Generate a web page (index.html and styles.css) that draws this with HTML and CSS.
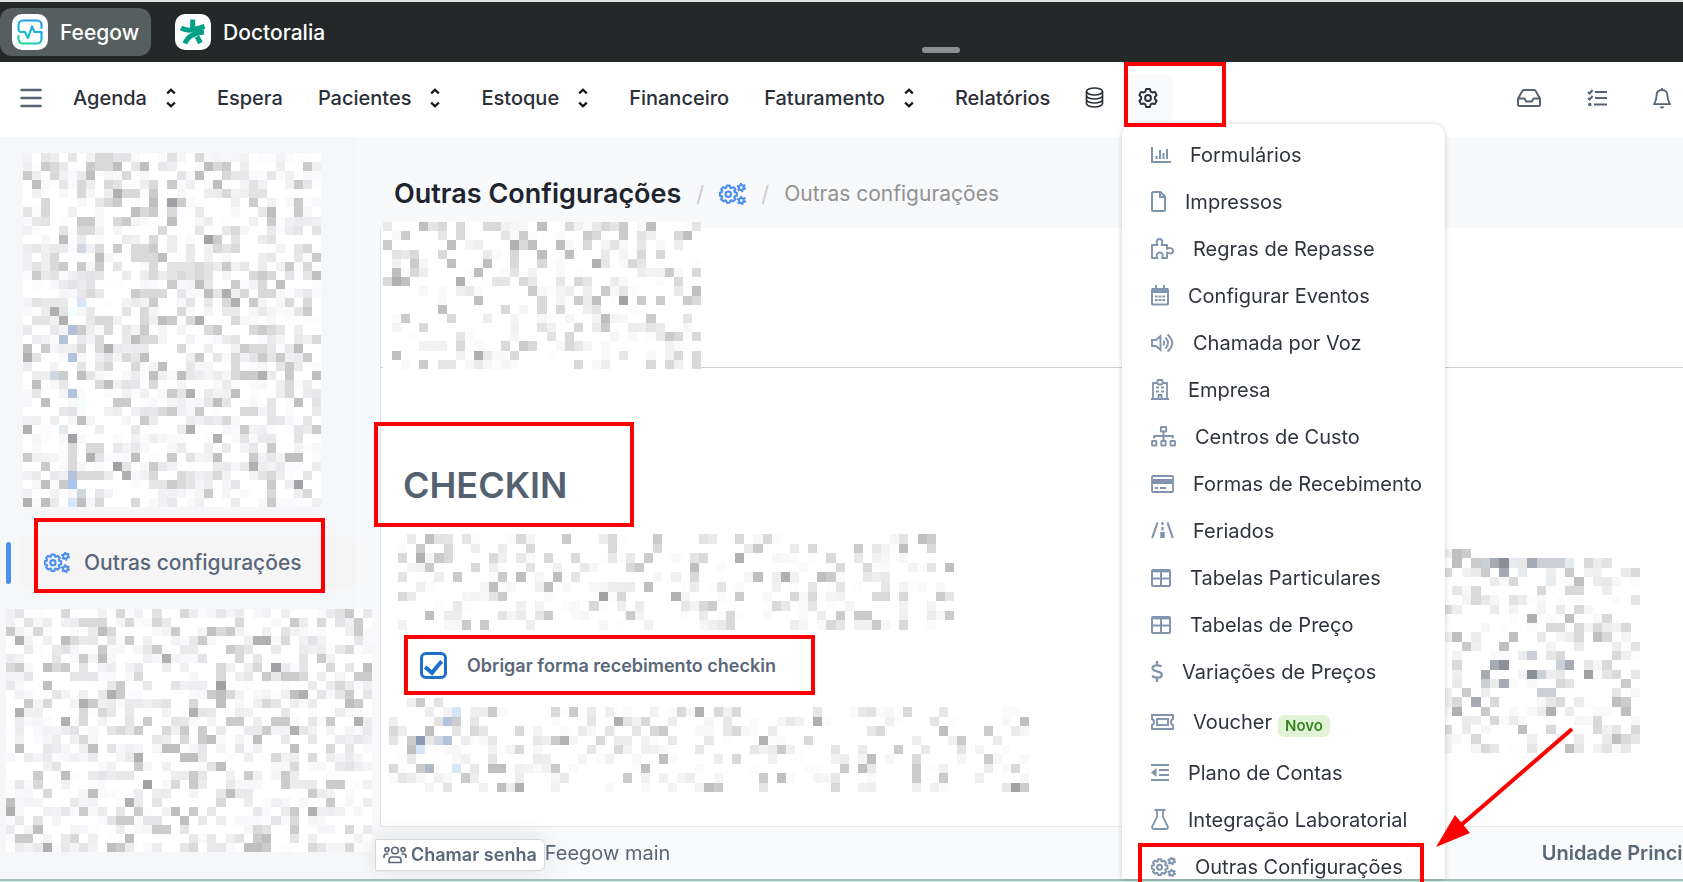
FILE: index.html
```html
<!DOCTYPE html>
<html lang="pt-BR">
<head>
<meta charset="utf-8">
<title>Outras Configurações</title>
<link rel="stylesheet" href="styles.css">
</head>
<body>
<svg class="defs" aria-hidden="true">
  <defs>
    <linearGradient id="brand" x1="0" y1="1" x2="0.6" y2="0"><stop offset="0" stop-color="#1fe08a"/><stop offset="0.5" stop-color="#19b9d8"/><stop offset="1" stop-color="#1f9df0"/></linearGradient>
    <path id="teeth" d="M-1.4-7.9H1.4L1.9-6L2.9-5.6L4.6-6.6L6.6-4.6L5.6-2.9L6-1.9L7.9-1.4V1.4L6 1.9L5.6 2.9L6.6 4.6L4.6 6.6L2.9 5.6L1.9 6L1.4 7.9H-1.4L-1.9 6L-2.9 5.6L-4.6 6.6L-6.6 4.6L-5.6 2.9L-6 1.9L-7.9 1.4V-1.4L-6-1.9L-5.6-2.9L-6.6-4.6L-4.6-6.6L-2.9-5.6L-1.9-6Z"/>
    <symbol id="cogs" viewBox="0 0 25 20">
      <g fill="none" stroke="currentColor" stroke-linejoin="round" stroke-width="2">
        <use href="#teeth" x="8.6" y="10.2"/><circle cx="8.6" cy="10.2" r="2.5"/>
      </g>
      <g fill="none" stroke="currentColor" stroke-width="2"><circle cx="20.7" cy="4" r="2.3"/><circle cx="20.7" cy="16" r="2.3"/></g>
      <g fill="none" stroke="currentColor" stroke-width="1.6" stroke-dasharray="1.9 1.9"><circle cx="20.7" cy="4" r="3.6"/><circle cx="20.7" cy="16" r="3.6"/></g>
    </symbol>
    <symbol id="updown" viewBox="0 0 10 20"><path d="M1.2 5.4L5 1.8L8.8 5.4M1.2 14.6L5 18.2L8.8 14.6" fill="none" stroke="currentColor" stroke-width="2.2"/></symbol>
    <symbol id="grid" viewBox="0 0 20 18"><path d="M2 1H18a1 1 0 0 1 1 1V16a1 1 0 0 1-1 1H2a1 1 0 0 1-1-1V2a1 1 0 0 1 1-1ZM1 9.5H19M10 2V17" fill="none" stroke="currentColor" stroke-width="2"/><path d="M1 1H19V3.4H1Z" fill="currentColor"/></symbol>
  </defs>
</svg>

<header class="products">
  <a class="product product-on" href="#"><span class="logo"><svg width="26" height="26" viewBox="0 0 26 26" fill="none" stroke="url(#brand)" stroke-width="2.200" stroke-linecap="round" stroke-linejoin="round"><path d="M1.500 10V6a4.500 4.500 0 0 1 4.500-4.500H20A4.500 4.500 0 0 1 24.500 6V9M24.500 13V20a4.500 4.500 0 0 1-4.500 4.500H6A4.500 4.500 0 0 1 1.500 20V17M1.500 10Q1.500 13 4 13H8L11 19L15 7.500L17.500 13H24.500"/></svg></span>Feegow</a>
  <a class="product" href="#"><span class="logo"><svg width="26" height="26" viewBox="0 0 26 26" fill="none" stroke="#00a187" stroke-width="5"><path d="M12.700 0.500V8.500M1 9C4.500 11 8.500 11.600 12.500 10.800C17 9.900 21 8.600 24.500 7.400"/><path d="M5 24.500C7.500 17.500 13 14 24 13"/><path d="M17 17.500L20.500 24"/></svg></span>Doctoralia</a>
  <span class="grip"></span>
</header>

<nav class="nav">
  <button class="icon-btn burger" aria-label="Menu"><svg width="22" height="20" viewBox="0 0 22 20" stroke="currentColor" stroke-width="2.600" stroke-linecap="round"><path d="M1.500 2H20.500M1.500 10H20.500M1.500 18H20.500"/></svg></button>
  <a href="#">Agenda<svg class="updown"><use href="#updown"/></svg></a>
  <a href="#">Espera</a>
  <a href="#">Pacientes<svg class="updown"><use href="#updown"/></svg></a>
  <a href="#">Estoque<svg class="updown"><use href="#updown"/></svg></a>
  <a href="#">Financeiro</a>
  <a href="#">Faturamento<svg class="updown"><use href="#updown"/></svg></a>
  <a href="#">Relatórios</a>
  <a href="#" aria-label="Dados"><svg width="19" height="21" viewBox="0 0 19 21" fill="none" stroke="currentColor" stroke-width="1.700"><ellipse cx="9.500" cy="4.500" rx="8" ry="3.500"/><path d="M1.500 4.500V16.500C1.500 18.500 5 20 9.500 20S17.500 18.500 17.500 16.500V4.500M1.500 8.500C1.500 10.500 5 12 9.500 12S17.500 10.500 17.500 8.500M1.500 12.500C1.500 14.500 5 16 9.500 16S17.500 14.500 17.500 12.500"/></svg></a>
  <button class="icon-btn gear" aria-label="Configurações"><svg width="22" height="22" viewBox="0 0 24 24" fill="none" stroke="currentColor" stroke-width="2.100" stroke-linejoin="round"><path d="M9.900 2.200H14.100L14.800 5L16.700 6L19.400 5.300L21.500 8.900L19.500 10.900V13.100L21.500 15.100L19.400 18.700L16.700 18L14.800 19L14.100 21.800H9.900L9.200 19L7.300 18L4.600 18.700L2.500 15.100L4.500 13.100V10.900L2.500 8.900L4.600 5.300L7.300 6L9.200 5Z"/><circle cx="12" cy="12" r="3.200"/></svg></button>
  <span class="nav-end">
    <button class="icon-btn" aria-label="Entrada"><svg width="24" height="18" viewBox="0 0 24 18" fill="none" stroke="currentColor" stroke-width="2" stroke-linejoin="round"><path d="M1 9.500L5.500 1.800Q6 1 7 1H17Q18 1 18.500 1.800L23 9.500V15.500Q23 17 21.500 17H2.500Q1 17 1 15.500ZM1.500 9.500H7.500L9.200 12.500H14.800L16.500 9.500H22.500"/></svg></button>
    <button class="icon-btn" aria-label="Tarefas"><svg width="20" height="18" viewBox="0 0 20 18" fill="none" stroke="currentColor" stroke-width="2"><path d="M8 3H20M8 9H20M7 15.500H20M1 3L2.600 4.500L5.600 1M1 9L2.600 10.500L5.600 7"/><circle cx="2.800" cy="15.500" r="0.800"/></svg></button>
    <button class="icon-btn" aria-label="Notificações"><svg width="18" height="22" viewBox="0 0 18 22" fill="none" stroke="currentColor" stroke-width="1.800" stroke-linejoin="round"><path d="M9 1V3M9 3C5.500 3 3.500 5.500 3.500 9C3.500 13 2.500 14.500 1 17.200H17C15.500 14.500 14.500 13 14.500 9C14.500 5.500 12.500 3 9 3Z"/><path d="M6.500 19.500H11.500Q11 21.500 9 21.500T6.500 19.500Z" fill="currentColor" stroke="none"/></svg></button>
  </span>
</nav>

<div class="body">
  <aside class="side">
    <canvas class="blur blur-a" id="m1"></canvas>
    <a class="side-item" href="#"><svg width="26" height="21"><use href="#cogs"/></svg>Outras configurações</a>
    <canvas class="blur blur-b" id="m6"></canvas>
  </aside>
  <main class="main">
    <div class="crumbs">
      <h1>Outras Configurações</h1><i>/</i><svg width="27" height="22"><use href="#cogs"/></svg><i>/</i><span>Outras configurações</span>
    </div>
    <section class="panel">
      <div class="tabs"><canvas class="blur blur-c" id="m2"></canvas></div>
      <div class="cols">
        <div class="form">
          <h2>CHECKIN</h2>
          <canvas class="blur blur-d" id="m3"></canvas>
          <label class="check"><input type="checkbox" checked>Obrigar forma recebimento checkin</label>
          <canvas class="blur blur-e" id="m4"></canvas>
        </div>
        <canvas class="blur blur-f" id="m5"></canvas>
      </div>
    </section>
    <footer class="foot">
      <button class="call"><svg width="24" height="18" viewBox="0 0 24 18" fill="none" stroke="currentColor" stroke-width="1.600"><circle cx="12" cy="4.500" r="3.300"/><circle cx="4" cy="3.600" r="2"/><circle cx="20" cy="3.600" r="2"/><path d="M6 16.500V14.500Q6 11 9 11H15Q18 11 18 14.500V16.500ZM1 12V10.500Q1 8 3.500 8H5.500M23 12V10.500Q23 8 20.500 8H18.500"/></svg>Chamar senha</button>
      <span>Feegow main</span>
      <strong>Unidade Principal</strong>
    </footer>
  </main>
</div>
<div class="baseline"></div>

<div class="menu">
  <a href="#"><svg width="20" height="16" viewBox="0 0 20 16" fill="none" stroke="currentColor" stroke-width="2"><path d="M1 0V15H20M5.500 9V12M9 3V12M12.500 6V12M16 2V12"/></svg>Formulários</a>
  <a href="#"><svg width="15" height="21" viewBox="0 0 15 21" fill="none" stroke="currentColor" stroke-width="2"><path d="M2.500 1H9.500L14 5.500V18.500Q14 20 12.500 20H2.500Q1 20 1 18.500V2.500Q1 1 2.500 1ZM9 1V6H14"/></svg>Impressos</a>
  <a href="#"><svg width="23" height="21" viewBox="0 0 23 21" fill="none" stroke="currentColor" stroke-width="1.900" stroke-linejoin="round"><path d="M1 7H6.500C5.500 5.500 5 1 8.500 1S11.500 5.500 10.500 7H16V11C17.500 9.500 22 9.500 22 13S17.500 15.500 16 14.500V20H11C12.500 17 11.500 14.500 8.800 14.500S5 17 6.500 20H1V16Z"/></svg>Regras de Repasse</a>
  <a href="#"><svg width="18" height="21" viewBox="0 0 18 21" fill="none" stroke="currentColor" stroke-width="2"><rect x="1" y="4" width="16" height="15.500" rx="1"/><path d="M1 5.500H17" stroke-width="5"/><path d="M5 0V4M13 0V4"/><path d="M4 11.500H14M4 15H14" stroke-dasharray="2.600 1.100"/></svg>Configurar Eventos</a>
  <a href="#"><svg width="23" height="20" viewBox="0 0 23 20" fill="none" stroke="currentColor" stroke-width="1.900"><path d="M1 7H5L9.500 3V17L5 13H1ZM12.500 7.500Q14 10 12.500 12.500M14.500 4.500Q19.500 10 14.500 15.500M16.500 1.500Q26 10 16.500 18.500"/></svg>Chamada por Voz</a>
  <a href="#"><svg width="18" height="21" viewBox="0 0 18 21" fill="none" stroke="currentColor" stroke-width="1.800"><path d="M0 20H18M2 20V4H16V20M7.500 20V16H10.500V20"/><path d="M5 8.500H8M10 8.500H13M5 12.500H8M10 12.500H13" stroke-width="2.200"/><rect x="6.500" y="1" width="5" height="4.500" rx="1" fill="#fff"/></svg>Empresa</a>
  <a href="#"><svg width="25" height="21" viewBox="0 0 25 21" fill="none" stroke="currentColor" stroke-width="1.900"><rect x="9.800" y="1" width="5.400" height="4.500" rx="0.500"/><rect x="1" y="15" width="4.400" height="4.500" rx="0.500"/><rect x="10.300" y="15" width="4.400" height="4.500" rx="0.500"/><rect x="19.600" y="15" width="4.400" height="4.500" rx="0.500"/><path d="M12.500 5.500V15M3.200 12.500V10H21.800V12.500"/></svg>Centros de Custo</a>
  <a href="#"><svg width="23" height="18" viewBox="0 0 23 18" fill="none" stroke="currentColor" stroke-width="1.800"><rect x="1" y="1" width="21" height="16" rx="1"/><path d="M1 6.500H22" stroke-width="5"/><path d="M4 13H7M9 13H15"/></svg>Formas de Recebimento</a>
  <a href="#"><svg width="23" height="17" viewBox="0 0 23 17" fill="none" stroke="currentColor" stroke-width="2.200"><path d="M6.500 0.500L1.200 16M16.500 0.500L21.800 16M11.500 0V3M11.500 5V8.500"/><path d="M11.500 10V16" stroke-width="4.500"/></svg>Feriados</a>
  <a href="#"><svg width="20" height="18"><use href="#grid"/></svg>Tabelas Particulares</a>
  <a href="#"><svg width="20" height="18"><use href="#grid"/></svg>Tabelas de Preço</a>
  <a href="#"><svg width="12" height="21" viewBox="0 0 12 21" fill="none" stroke="currentColor" stroke-width="2.300"><path d="M10.500 5.500C8 3.800 1.500 3.500 1.500 7.200C1.500 11.500 10.800 9 10.800 13.700C10.800 17.500 4 17.300 1 15M6 0V4M6 17V21"/></svg>Variações de Preços</a>
  <a class="tall" href="#"><svg width="23" height="16" viewBox="0 0 23 16" fill="none" stroke="currentColor" stroke-width="1.900"><path d="M1 1H22V5Q20 5.500 20 8T22 11V15H1V11Q3 10.500 3 8T1 5Z"/><rect x="6" y="5" width="11" height="6"/></svg>Voucher<em>Novo</em></a>
  <a href="#"><svg width="18" height="17" viewBox="0 0 18 17" fill="none" stroke="currentColor" stroke-width="1.900"><path d="M0 1H18M8 6H18M8 11H18M0 16H18"/><path d="M5.500 4V13L0 8.500Z" fill="currentColor" stroke="none"/></svg>Plano de Contas</a>
  <a href="#"><svg width="18" height="21" viewBox="0 0 18 21" fill="none" stroke="currentColor" stroke-width="1.800"><path d="M3.500 1H14.500M6 1V8L1.200 17.500Q0.500 20 2.800 20H15.200Q17.500 20 16.800 17.500L12 8V1"/></svg>Integração Laboratorial</a>
  <a href="#"><svg width="25" height="20"><use href="#cogs"/></svg>Outras Configurações</a>
</div>

<svg class="marks" fill="none" stroke="#ff0000" stroke-width="4">
  <rect x="1126" y="64" width="98" height="61"/>
  <rect x="36" y="520" width="287" height="71"/>
  <rect x="376" y="424" width="256" height="101"/>
  <rect x="406" y="637" width="407" height="56"/>
  <rect x="1140" y="845" width="282" height="42"/>
  <path d="M1572 729L1460 826"/>
  <path d="M1436 847L1455 815L1470 833Z" fill="#ff0000" stroke="none"/>
</svg>
<script src="mosaic.js"></script>
</body>
</html>
```
FILE: styles.css
```css
* { box-sizing: border-box; }
body {
  margin: 0;
  height: 100vh;
  overflow: hidden;
  position: relative;
  display: flex;
  flex-direction: column;
  font-family: Inter, "Liberation Sans", sans-serif;
  font-size: 20px;
  color: #2b2f38;
  background: #fff;
}
a { color: inherit; text-decoration: none; }
button { font: inherit; color: inherit; border: 0; background: none; padding: 0; }
svg { display: block; flex: none; }
canvas { display: block; image-rendering: pixelated; }
.defs { position: absolute; width: 0; height: 0; }

.products {
  flex: none;
  height: 62px;
  display: flex;
  align-items: center;
  gap: 12px;
  background: #242829;
  border-top: 2px solid #dfe3e1;
  color: #fff;
  font-size: 21px;
  font-weight: 500;
  position: relative;
}
.product { display: flex; align-items: center; gap: 12px; height: 48px; padding: 0 12px; border-radius: 12px; }
.product-on { background: #565f5f; }
.logo { width: 36px; height: 36px; border-radius: 10px; background: #fff; display: grid; place-items: center; }
.grip { position: absolute; left: 922px; bottom: 9px; width: 38px; height: 6px; border-radius: 3px; background: #899090; }

.nav { flex: none; height: 75px; display: flex; align-items: center; gap: 35px; padding: 0 12px 4px 20px; font-weight: 500; }
.nav a { display: flex; align-items: center; }
.updown { width: 10px; height: 20px; margin: 0 6px 0 19px; color: #111; }
.icon-btn { color: #566375; }
.burger { margin-right: -4px; }
.gear { width: 52px; height: 48px; margin-left: -18px; padding-left: 16px; border-radius: 8px; background: #f9fafc; color: #2b2f38; }
.nav-end { margin-left: auto; display: flex; align-items: center; gap: 46px; }

.body { flex: 1; min-height: 0; display: flex; background: #f8f9fb; }
.side { flex: none; width: 380px; background: linear-gradient(90deg, #f6f7f9 355px, #f8f9fa 356px); padding-top: 16px; }
.blur-a { width: 298px; height: 354px; margin-left: 23px; }
.side-item {
  display: flex;
  align-items: center;
  gap: 14px;
  height: 55px;
  margin: 28px 24px 19px 18px;
  padding-left: 26px;
  border-radius: 10px;
  background: #f5f5f5;
  color: #5a6778;
  font-size: 21px;
  font-weight: 500;
  position: relative;
}
.side-item svg { color: #4d8fef; }
.side-item::before { content: ""; position: absolute; left: -12px; top: 7px; width: 5px; height: 42px; border-radius: 3px; background: #4d8fef; }
.blur-b { width: 366px; height: 243px; margin-left: 6px; }

.main { flex: 1; min-width: 0; display: flex; flex-direction: column; }
.crumbs { flex: none; height: 91px; display: flex; align-items: center; gap: 15px; padding: 22px 0 0 14px; font-size: 21px; color: #919191; }
.crumbs h1 { margin: 0; font-size: 27px; font-weight: 600; color: #20242d; }
.crumbs i { font-style: normal; color: #ccc; font-size: 22px; }
.crumbs svg { color: #4d8fef; }
.panel { flex: 1; min-height: 0; background: #fff; border-left: 1px solid #e0e3e6; }
.tabs { height: 140px; border-bottom: 1px solid #cfcfcf; }
.blur-c { width: 318px; height: 147px; margin-left: 2px; position: relative; top: -6px; }
.cols { display: flex; justify-content: space-between; padding: 95px 43px 0 8px; }
h2 { margin: 0 0 26px 14px; font-size: 36px; line-height: 45px; font-weight: 600; color: #546171; }
.blur-d { width: 556px; height: 96px; margin-left: 9px; }
.check { display: flex; align-items: center; gap: 20px; margin: 22px 0 19px 31px; height: 27px; font-size: 18px; font-weight: 600; color: #5a6778; }
.check input { appearance: none; width: 27px; height: 27px; margin: 0; border: 3px solid #1f6fc9; border-radius: 6px; display: grid; place-items: center; }
.check input::before { content: ""; width: 7px; height: 13px; border: solid #1f6fc9; border-width: 0 4px 4px 0; transform: rotate(40deg); }
.blur-e { width: 640px; height: 94px; }
.blur-f { width: 197px; height: 204px; margin-top: 86px; }
.foot {
  flex: none;
  height: 53px;
  display: flex;
  align-items: center;
  border-top: 1px solid #e4e6e8;
  background: #f8fafc;
  color: #5a6778;
}
.foot strong { margin-left: auto; margin-right: -29px; font-weight: 600; white-space: nowrap; }
.call {
  display: flex;
  align-items: center;
  gap: 4px;
  height: 32px;
  margin: 3px 0 0 -5px;
  padding: 0 7px;
  background: #fff;
  border: 1px solid #d6d8da;
  border-radius: 0 6px 6px 0;
  font-size: 18px;
  font-weight: 600;
  box-shadow: 0 0 30px rgba(0, 0, 0, 0.12);
}
.baseline { flex: none; height: 3px; background: #c8efe5; border-top: 2px solid #a3bfb8; }

.menu {
  position: absolute;
  left: 1122px;
  top: 124px;
  width: 323px;
  height: 755px;
  overflow: hidden;
  padding: 7px 0 0 29px;
  background: #fff;
  border-radius: 12px 12px 0 0;
  box-shadow: 0 0 5px rgba(0, 0, 0, 0.2);
}
.menu a { display: flex; align-items: center; gap: 19px; height: 47px; white-space: nowrap; color: #2f343d; }
.menu svg { color: #8194ad; }
.menu .tall { height: 54px; }
.menu em { margin: 8px 0 0 -13px; padding: 0 7px; border-radius: 6px; background: #e0f3d6; color: #35851f; font-size: 15px; line-height: 22px; font-weight: 600; font-style: normal; }
.marks { position: absolute; left: 0; top: 0; width: 100%; height: 100%; pointer-events: none; }
```
FILE: mosaic.js
```js
// Censored areas: each row lists pairs of column symbol + shade; the other cells get a light noise.
var COLS = "0123456789abcdefghijklmnopqrstuvwxyzABCDEFGHIJKLMNOPQRSTUVWXYZ!#$%&*+=@";
var SHADES = { "2": "#efefef", "3": "#e3e3e4", "4": "#d9d9da", "5": "#cbcbcc", "6": "#bfbfc0", "7": "#b0b0b1", "8": "#a2a2a4",
  x: "#cfd7e0", y: "#d8e5f8", z: "#f2fffd", b: "#b2c2dc", c: "#a8c3ec", d: "#8a9ab5", e: "#aeb9c4",
  s: "#cbcfd7", t: "#a6aab4", u: "#8b8f99", v: "#e6ebf0" };

function paint(id, cols, tint, noise, rows, blank) {
  var c = document.getElementById(id), g = c.getContext("2d"), seed = cols * 977;
  c.width = cols; c.height = rows.length;
  g.fillStyle = "#fff"; g.fillRect(0, 0, cols, rows.length);
  rows.forEach(function (row, y) {
    for (var x = 0; x < cols; x++) {
      seed = (seed * 16807) % 2147483647;
      var r = seed / 2147483647;
      if (r < noise && y >= blank) {
        var v = Math.round(253 - 26 * Math.pow(r / noise, 1.3));
        g.fillStyle = "rgb(" + v + "," + v + "," + Math.min(255, v + tint) + ")";
        g.fillRect(x, y, 1, 1);
      }
    }
    row.split(" ").forEach(function (p) {
      if (!p) return;
      g.fillStyle = SHADES[p[1]];
      g.fillRect(COLS.indexOf(p[0]), y, 1, 1);
    });
  });
}

paint("m1", 33, 2, 0.52, ["84 94 g3 j4", "25 34 75 84 94 a6 d6 k6 l4 m5 v5", "05 34 76 b4 j6 m4", "16 64 94 e4 g5 l6 u5", "64 a7 b4 c4 e5 m4 p3 q3", "24 94 a5 e6 g8 h5 p5 u5", "03 24 c6 d4 e5 g4 r6 u5", "23 65 75 a4 b5 g6 r5", "64 74 f4 n4 w3", "46 e4 k8 l5 r3", "6x 84 a5 c4 d4 e5 l4 n4 v4", "34 86 c4 d4 e4 f6 w5", "13 34 45 65 85 e4 g3 h3 i3 j4 k3 m5 t5 v4", "15 33 e4 g3 h4 i3 j4 k3 p4 q5 r4 w6", "g5 j6 n5 q4 s6", "74 c5 d4 e4 f4 k6 m7 o4 q4 r4", "13 6y e5 m4 n7 p5 v4 t4", "37 5z b3 d4 h4 v5", "47 13 23 84 94 d4 f6 g5 i4 j7 n4", "5b 65 94 d5 k4 l5 q5 p4 r4", "4b 84 c6 d4 e4 n3 w4", "06 25 64 84 97 h4 o5 p4 q4 u6", "07 5b b4 d6 j5 n4 q5 s5 v5", "94 c4 f6 n4 t5", "3x 45 66 e6 h6 n4 o5 p5 q7 t5 w6", "16 84 96 e4 t4", "5b g5 i7 n6 t4", "26 6z a5 b5 l6 u6", "f4 g5 j5 o4 p4", "66 d5 m4", "07 4v i7 o5 w5", "58 l7", "54 74 84 r5", "05 54 77 c6 g5 l6 p5 t6 u6", "a8 54 e5 25 p7", "5b 64 74 84 b7 e4 h4 l4 r4", "26 45 5c g5 h4 r5 u8", "6x k5 r4 v4", "07 26 5y 66 84 c4 r5"], 0);

paint("m6", 40, 2, 0.52, ["64 c4 j4 B5", "23 84 94 a4 d4 g4 p4 v5 y4 C5", "05 34 a6 b4 i5 m6 n4 o5 C5", "17 66 74 d5 l5 r7 s7 u4", "a5 g5 o5 p4 B4", "85 a6 h7 p4 y5", "04 15 46 54 65 n4 t8 r4 z4 D6", "e4 n4 s5 u5 v5 w4 C5 D5", "46 c5 n8 A4", "b7 c5 m5 n6 o4 v6 w7 B5", "25 44 87 95 k4 n6 s4 B6 C5", "17 k7 84 a4", "67 f5 84 o5 p5 t5 u5 C7 z5", "c4 e5 h4 j5 l5 s5 v7", "84 l5 m6 r6 j4", "16 96 h6 i6 v6 z4", "e7 j6 k6 t4 x4", "e5 n6 v4", "35 66 k5 q5 u5", "f8 34 i4 k5 u5 z5 A5", "44 96 o6 x5", "06 d7 n4 z5", "07 85 e5 i6 k5 v5 x7", "c5 d5 j6 v4", "36 g5 h5 r4 v5 B4", "15 25 74 d6 r5 s6", "47 b6 c5 k4 q6 r6 s5 x4 B4"], 0);

paint("m2", 35, 0, 0.34, ["46 64 84 b4 c4 h6 k4 o4 q5 t6", "25 84 f5 m5 q5 n4 x6 w4", "05 76 e7 g6 j6 f4 m4", "13 34 64 h6 k6 s4 u4 e4", "35 76 b6 n7 r4 e4 h4", "16 34 a6 v5 y4 e3", "04 17 26 87 f4 l4 w4", "g5 o5 y6", "a6 h4 l5 n6 q8 s5 u5 x5 y4", "66 d4 h4 j4", "25 o6 t5 74", "44 l4 o5", "k4 v5 w4 y4", "84 d4 f5 g4 k4", "16 a7 e4 w4 y4", "45 l4 v4 y4 t4"], 0);

paint("m3", 61, 0, 0.33, ["36 d4 i5 n4 s5 x3 B4 E4 V6 W5", "25 54 e4 n4 s4 D5 J4 O5 T6 W4", "04 27 45 54 a4 g4 j4 r5 x4 B7 L4", "35 84 p4 q5 w6 M4 P4 Y6", "65 b5 d6 h6 D6 G7 K6 L5 w4", "a6 g6 r6", "04 b5 m8 o4 u7 B5 H4 J4 Q4 R4 T4 X5", "l4 x4 y5 F4", "36 g5 p5 A4 P5 O5 M5 Y5", "75 95 A4 L4 Q5 T4"], 0);

paint("m4", 71, 0, 0.33, ["22 35 53", "b5 i4 k5 w4 y7 A4 C4 V4 7y", "6b 75 p7 s4 L7 @6", "04 46 94 e4 t4 u5 C4 S4 Z6 &5", "25 3d 5x 6b i5 j7 n4 F7 K4 #5", "26 3y e4 p4 U5 H5", "u6 R6 C4 W4 &5", "04 35 4e 7y b6 c6 i5 s6 O5 Q6 W5 =4", "85 q5 F5 H6 W5 Z5", "c6 e7 z6 A5 N4 =8 @5"], 1);

paint("m5", 21, 0, 0.38, ["02 16 25", "16 35 4s 5t 6u 7v 9t as bs cs dv f4 h3", "04 45 6t 8v d5 k4", "74 e6 bv", "34 a4 d4 e4", "34 73", "04 e4", "97 d6 h4", "b4 c4 e4 g4 j4", "16 76 g6 h4 e4", "25 66 k3", "9s c4 i4", "14 5t 6u cs dt h4", "4t 9u as f8 i4", "4s 6t c4 j5", "25 as bs", "14 3t 54 i6 j5 c4", "17 45 b7 j6", "54 g4", "04 86 b4 k4 g4", "34 i6 j4", "44 d6 h3"], 1);
```
